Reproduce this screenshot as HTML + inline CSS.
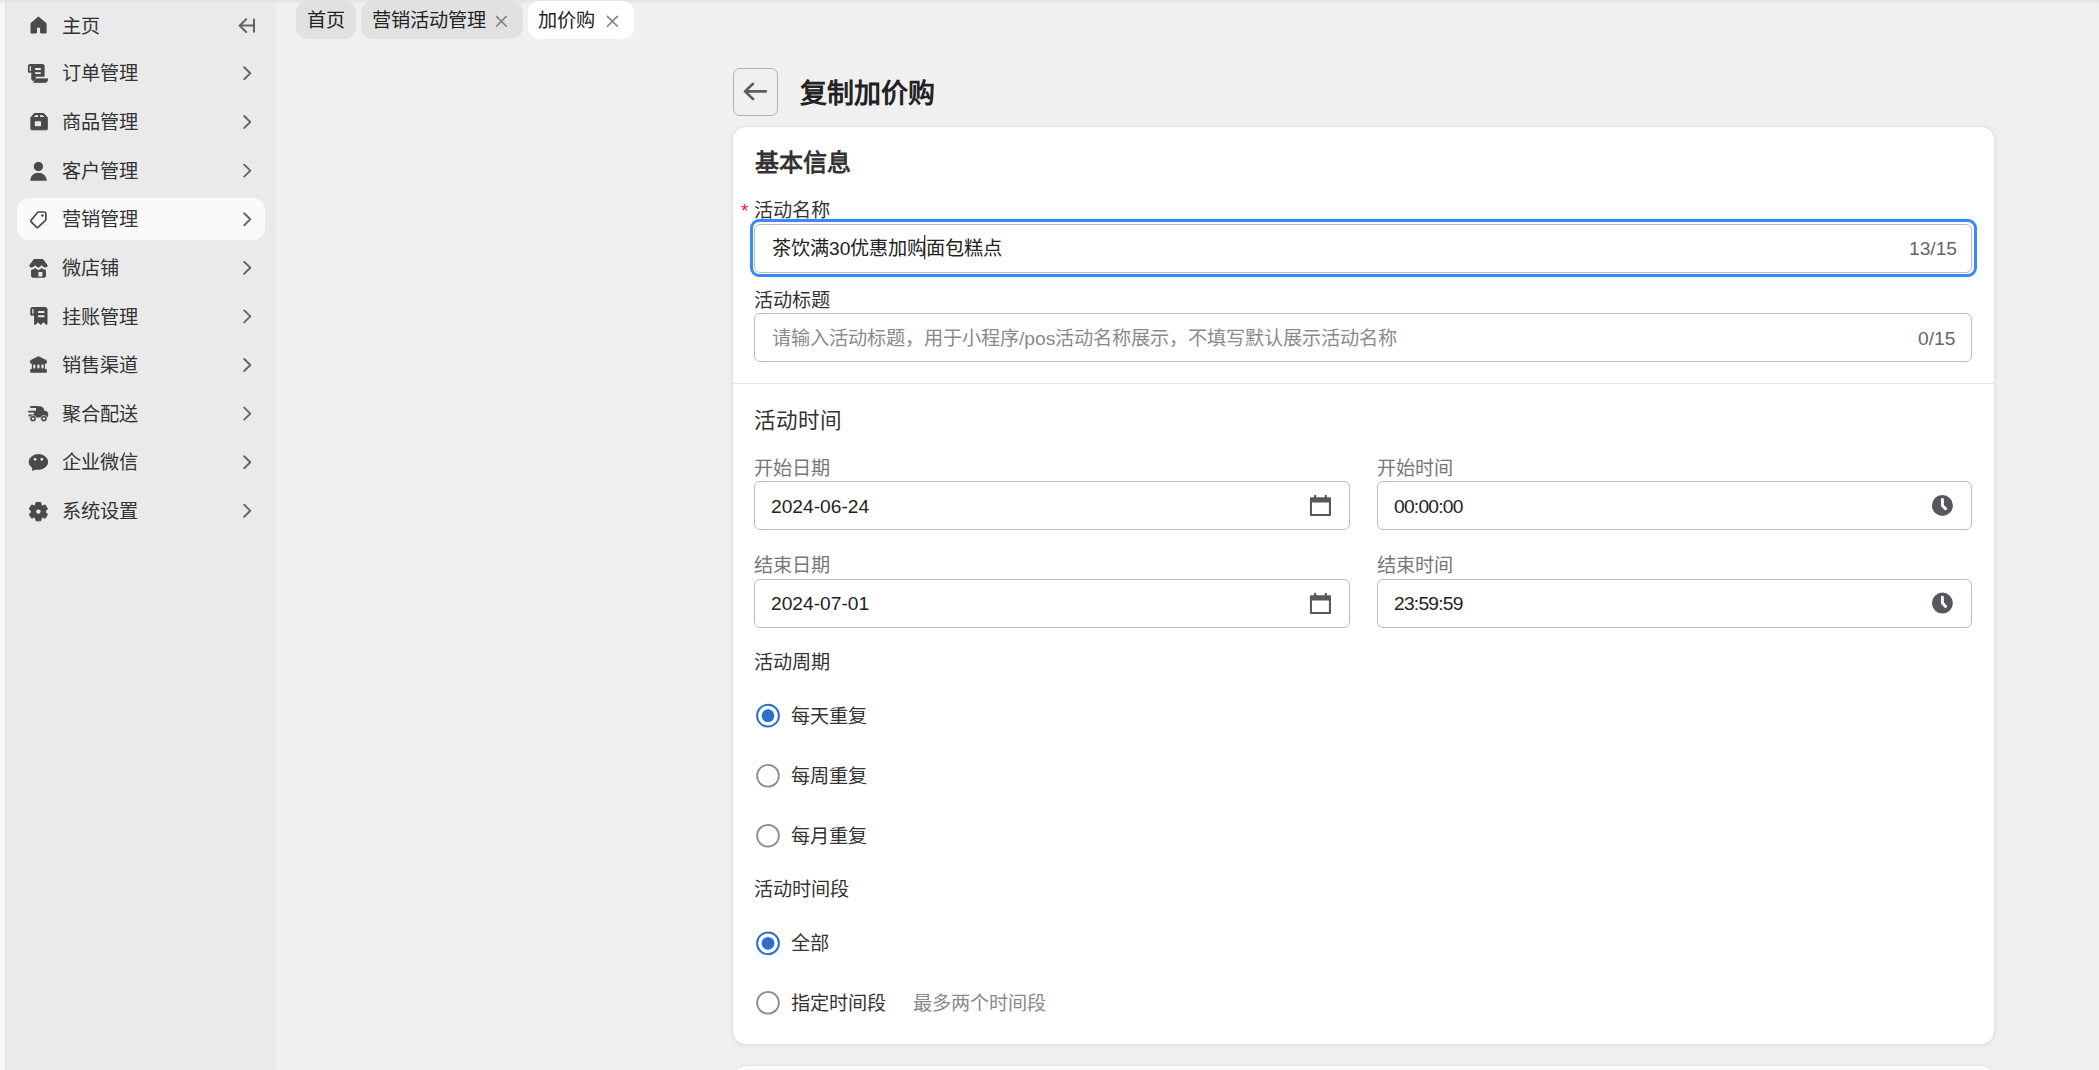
<!DOCTYPE html>
<html lang="zh-CN"><head><meta charset="utf-8">
<style>
*{box-sizing:border-box;margin:0;padding:0}
html,body{width:2099px;height:1070px;overflow:hidden;background:#f0f0f0;font-family:"Liberation Sans",sans-serif;}
.a{position:absolute;white-space:nowrap;line-height:20px;font-size:19.2px;margin-top:1.2px}
.d{margin-top:0}
#strip{position:absolute;left:0;top:0;width:5px;height:1070px;background:#f7f7f7}
#side{position:absolute;left:5px;top:0;width:271px;height:1070px;background:#eaeaea;box-shadow:inset 1px 0 #e2e2e2}
#topsh{position:absolute;left:0;top:0;width:2099px;height:4px;background:linear-gradient(#e2e2e2,rgba(240,240,240,0))}
.mi{color:#333;left:62px}
.tab{position:absolute;top:1px;height:38px;border-radius:12px;background:#e1e1e1}
.tt{color:#222}
.card{position:absolute;left:733px;width:1261px;background:#fff;border-radius:12px;box-shadow:0 0 1px rgba(0,0,0,0.3),0 1px 6px rgba(0,0,0,0.07)}
.inp{position:absolute;height:49px;border:1px solid #b6bcc3;border-radius:6px;background:#fff}
.lbl{color:#333}
.glbl{color:#777}
.val{color:#222}
.ph{color:#8a8a8a}
.cnt{color:#666}
</style></head><body>
<div id="strip"></div>
<div id="side"></div>
<div style="position:absolute;left:17px;top:198px;width:248px;height:42px;border-radius:12px;background:#fafafa"></div>

<!-- sidebar texts -->
<div class="a mi" style="top:15.6px">主页</div>
<div class="a mi" style="top:63.2px">订单管理</div>
<div class="a mi" style="top:112px">商品管理</div>
<div class="a mi" style="top:160.6px">客户管理</div>
<div class="a mi" style="top:209.2px">营销管理</div>
<div class="a mi" style="top:257.8px">微店铺</div>
<div class="a mi" style="top:306.4px">挂账管理</div>
<div class="a mi" style="top:355px">销售渠道</div>
<div class="a mi" style="top:403.6px">聚合配送</div>
<div class="a mi" style="top:452.2px">企业微信</div>
<div class="a mi" style="top:500.8px">系统设置</div>

<!-- sidebar icons -->
<svg id="sideicons" style="position:absolute;left:0;top:0" width="276" height="540" viewBox="0 0 276 540">
<g fill="#4a4a4a" stroke="#4a4a4a" stroke-width="1" stroke-linejoin="round">
<!-- home -->
<path d="M31,23.3 L38.4,17 L46.1,23.3 L46.1,33 L40.6,33 L40.6,28.2 Q40.6,27.3 39.7,27.3 L37.4,27.3 Q36.5,27.3 36.5,28.2 L36.5,33 L31,33 Z"/>
<!-- order/scroll -->
<path d="M28.4,66 Q28.4,64.5 30,64.5 L42.6,64.5 Q44.1,64.5 44.1,66 L44.1,76.2 L35.3,76.2 L35.3,79 Q35.3,80.6 33.4,80.6 Q31.8,80.6 31.8,79 L31.8,72.2 L28.4,72.2 Z"/>
<path d="M36.2,78.9 L47.7,78.9 Q47.6,82.2 45.2,82.3 L33.6,82.3 Q35.9,81.5 36.2,78.9 Z"/>
<!-- box -->
<path d="M34.3,113.5 L43.8,113.5 L47.3,117.6 L47.3,129 Q47.3,129.8 46.5,129.8 L31.7,129.8 Q30.9,129.8 30.9,129 L30.9,117.6 Z"/>
<!-- person -->
<circle cx="38.4" cy="166.5" r="4.1"/>
<path d="M30.7,180.2 Q31.6,173.3 38.4,173.3 Q45.2,173.3 46.3,180.2 Z"/>
<!-- store -->
<path d="M34,259.5 L42.9,259.5 L47.2,265.4 Q47.5,267.1 45.5,267.1 Q43.3,267.1 41.5,264.6 Q40.3,267.1 38.4,267.1 Q36.5,267.1 35.4,264.6 Q33.7,267.1 31.4,267.1 Q29.4,267.1 29.7,265.4 Z"/>
<path d="M31.6,270.2 Q33.8,270 35.4,268.4 Q36.8,270.4 38.4,270.4 Q40,270.4 41.5,268.4 Q43.1,270 45.4,270.2 L45.4,276.3 Q45.4,277.2 44.5,277.2 L32.5,277.2 Q31.6,277.2 31.6,276.3 Z"/>
<!-- receipt -->
<path d="M30.8,309 Q30.8,307.5 32.4,307.5 L45.4,307.5 Q47,307.5 47,309 L47,324.3 L46.3,324.5 L43.5,321.8 L40.8,324.5 L38,321.8 L35.3,324.5 L34.6,324.3 L34.6,315.1 L30.8,315.1 Z"/>
<!-- bank -->
<path d="M38.4,356.7 L46.3,360.6 L46.3,363.2 L30.7,363.2 L30.7,360.6 Z"/>
<rect x="31.9" y="363.2" width="13" height="6" stroke="none"/>
<rect x="30.7" y="369.4" width="15.6" height="2.8"/>
<!-- truck -->
<path d="M36.5,406.8 L40.8,406.8 Q43.5,407 43.9,411 L46.4,411.6 Q47.7,412 47.7,413.6 L47.7,416.2 Q47.7,417 46.9,417 L34.4,417 L34.4,412.3 L36.5,412.3 Z"/>
<!-- chat -->
<ellipse cx="38.4" cy="461.9" rx="9.3" ry="7.4"/>
<path d="M33.2,466.5 L32.4,470.3 L37,468.6 Z"/>
<!-- gear -->
<path d="M35.45,505.20 L36.05,502.40 L40.75,502.40 L41.35,505.20 L42.47,505.85 L45.19,504.96 L47.54,509.04 L45.42,510.95 L45.42,512.25 L47.54,514.16 L45.19,518.24 L42.47,517.35 L41.35,518.00 L40.75,520.80 L36.05,520.80 L35.45,518.00 L34.33,517.35 L31.61,518.24 L29.26,514.16 L31.38,512.25 L31.38,510.95 L29.26,509.04 L31.61,504.96 L34.33,505.85 Z"/>
</g>
<g stroke="#4a4a4a" stroke-width="1.8" stroke-linecap="round" fill="none">
<path d="M31,407 L37,407 M28.9,411.7 L36,411.7 M29.3,415.5 L35,415.5"/>
</g>
<!-- truck wheels -->
<g fill="#4a4a4a" stroke="#eaeaea" stroke-width="0.6"><circle cx="33" cy="418.6" r="3.2"/><circle cx="43.9" cy="418.6" r="3.2"/></g>
<g fill="#eaeaea">
<circle cx="33" cy="418.6" r="1.2"/><circle cx="43.9" cy="418.6" r="1.2"/>
<!-- order holes -->
<rect x="29.7" y="65.9" width="1.2" height="5" rx="0.5"/>
<rect x="34.9" y="68" width="6.1" height="2" rx="0.8"/>
<rect x="34.9" y="72.3" width="6.1" height="1.8" rx="0.8"/>
<!-- box holes -->
<path d="M35.3,115.3 L38.1,115.3 L38.1,116.9 L33.9,116.9 Z"/>
<path d="M40,115.3 L42.8,115.3 L44.3,116.9 L40,116.9 Z"/>
<rect x="34.8" y="121.3" width="6.2" height="4.9" rx="0.8"/>
<!-- store door -->
<rect x="38.4" y="271.9" width="4" height="4.6" rx="0.6"/>
<!-- receipt holes -->
<rect x="32" y="309" width="1.6" height="4.8" rx="0.6" fill="#c8c8c8"/>
<rect x="37.9" y="311.1" width="6.7" height="1.9" rx="0.8"/>
<rect x="37.9" y="315.3" width="6.7" height="1.9" rx="0.8"/>
<!-- bank holes -->
<rect x="33.2" y="364.4" width="2.1" height="4.2" rx="1"/>
<rect x="37.3" y="364.4" width="2.2" height="4.2" rx="1"/>
<rect x="41.4" y="364.4" width="2.2" height="4.2" rx="1"/>
<!-- chat eyes -->
<circle cx="35.1" cy="459.3" r="1.4"/><circle cx="41.8" cy="459.3" r="1.4"/>
<!-- gear hole -->
<circle cx="38.4" cy="511.6" r="2.2"/>
</g>
<!-- tag (active) -->
<path d="M38.7,212 L44,212 Q45.9,212 45.9,213.9 L45.9,219 Q45.9,219.9 45.2,220.6 L38.2,227.2 Q37.3,228 36.4,227.2 L31.2,221.9 Q30.4,221 31.2,220.1 L37.3,212.8 Q37.9,212 38.7,212 Z" fill="none" stroke="#4a4a4a" stroke-width="1.7" stroke-linejoin="round"/>
<rect x="41.2" y="214.3" width="2.4" height="2.4" rx="0.5" transform="rotate(45 42.4 215.5)" fill="#4a4a4a"/>
<g stroke="#626262" stroke-width="2" stroke-linecap="round" stroke-linejoin="round" fill="none">
<path d="M246.2,19.2 L239.6,25.6 L246.2,32 M239.8,25.6 L253,25.6 M254,19.6 L254,31.8"/>
</g>
<g stroke="#666" stroke-width="1.9" stroke-linecap="round" stroke-linejoin="round" fill="none"><path d="M244.2,67.2 L250.3,73.2 L244.2,79.2"/><path d="M244.2,116.0 L250.3,122.0 L244.2,128.0"/><path d="M244.2,164.6 L250.3,170.6 L244.2,176.6"/><path d="M244.2,213.2 L250.3,219.2 L244.2,225.2"/><path d="M244.2,261.8 L250.3,267.8 L244.2,273.8"/><path d="M244.2,310.4 L250.3,316.4 L244.2,322.4"/><path d="M244.2,359.0 L250.3,365.0 L244.2,371.0"/><path d="M244.2,407.6 L250.3,413.6 L244.2,419.6"/><path d="M244.2,456.2 L250.3,462.2 L244.2,468.2"/><path d="M244.2,504.8 L250.3,510.8 L244.2,516.8"/></g>
</svg>

<div id="topsh"></div>
<!-- tabs -->
<div class="tab" style="left:296px;width:60px"></div>
<div class="tab" style="left:361px;width:162px"></div>
<div class="tab" style="left:528px;width:106px;background:#fff"></div>
<div class="a tt" style="left:307px;top:9.85px">首页</div>
<div class="a tt" style="left:372px;top:9.85px">营销活动管理</div>
<div class="a tt" style="left:538px;top:9.85px">加价购</div>


<!-- back button & title -->
<div style="position:absolute;left:733px;top:68px;width:45px;height:48px;border:1.2px solid #a9b1b9;border-radius:7px"></div>
<div class="a" style="left:800px;top:82.4px;font-size:27px;font-weight:bold;color:#222">复制加价购</div>

<!-- card -->
<div class="card" style="top:127px;height:917px"></div>
<div class="card" style="top:1066px;height:100px"></div>
<div style="position:absolute;left:733px;top:383px;width:1261px;height:1px;background:#e3e3e3"></div>

<div class="a" style="left:755px;top:152px;font-size:24px;font-weight:bold;color:#333">基本信息</div>

<div class="a" style="left:741px;top:200px;color:#e02424">*</div>
<div class="a lbl" style="left:754px;top:200px">活动名称</div>
<div style="position:absolute;left:750px;top:219px;width:1227px;height:58px;border:3px solid #3a88fd;border-radius:9px"></div>
<div class="inp" style="left:754px;top:224px;width:1218px"></div>
<div class="a val" style="left:772px;top:238px">茶饮满30优惠加购面包糕点</div>
<div class="a cnt d" style="left:1909px;top:239px">13/15</div>

<div class="a lbl" style="left:754px;top:289.4px">活动标题</div>
<div class="inp" style="left:754px;top:313px;width:1218px"></div>
<div class="a ph" style="left:772px;top:328.2px">请输入活动标题，用于小程序/pos活动名称展示，不填写默认展示活动名称</div>
<div class="a cnt d" style="left:1918px;top:328.5px">0/15</div>

<div class="a lbl" style="left:753.5px;top:409.9px;font-size:21.6px">活动时间</div>

<div class="a glbl" style="left:753.6px;top:457.5px">开始日期</div>
<div class="a glbl" style="left:1376.6px;top:457.5px">开始时间</div>
<div class="inp" style="left:754px;top:481px;width:596px"></div>
<div class="inp" style="left:1377px;top:481px;width:595px"></div>
<div class="a val d" style="left:771px;top:497px">2024-06-24</div>
<div class="a val d" style="left:1394px;top:497px;letter-spacing:-0.75px">00:00:00</div>

<div class="a glbl" style="left:753.6px;top:555px">结束日期</div>
<div class="a glbl" style="left:1376.6px;top:555px">结束时间</div>
<div class="inp" style="left:754px;top:579px;width:596px"></div>
<div class="inp" style="left:1377px;top:579px;width:595px"></div>
<div class="a val d" style="left:771px;top:594px">2024-07-01</div>
<div class="a val d" style="left:1394px;top:594px;letter-spacing:-0.75px">23:59:59</div>

<div class="a lbl" style="left:753.6px;top:652px">活动周期</div>
<div class="a lbl" style="left:791px;top:706px">每天重复</div>
<div class="a lbl" style="left:791px;top:766px">每周重复</div>
<div class="a lbl" style="left:791px;top:826px">每月重复</div>
<div class="a lbl" style="left:753.6px;top:879px">活动时间段</div>
<div class="a lbl" style="left:791px;top:933px">全部</div>
<div class="a lbl" style="left:791px;top:993px">指定时间段</div>
<div class="a ph" style="left:913px;top:993px">最多两个时间段</div>

<svg id="mainicons" style="position:absolute;left:0;top:0" width="2099" height="1070" viewBox="0 0 2099 1070">
<g stroke="#808080" stroke-width="1.5" stroke-linecap="round"><path d="M496.4,16.4 L506.3,26.3 M506.3,16.4 L496.4,26.3"/><path d="M607.4,16.4 L617.3,26.3 M617.3,16.4 L607.4,26.3"/></g>
<path d="M753,83.8 L745,91.4 L753,99 M745.2,91.4 L765.8,91.4" stroke="#5a5e62" stroke-width="2.6" stroke-linecap="round" stroke-linejoin="round" fill="none"/>
<g fill="#55595e"><path d="M1309.9,498.3 Q1309.9,497.3 1310.9,497.3 L1330.0,497.3 Q1331.0,497.3 1331.0,498.3 L1331.0,515.0 Q1331.0,516.0 1330.0,516.0 L1310.9,516.0 Q1309.9,516.0 1309.9,515.0 Z M1312.0,502.6 L1312.0,513.9 L1328.9,513.9 L1328.9,502.6 Z" fill-rule="evenodd"/>
<rect x="1314.1000000000001" y="494.7" width="2.2" height="4" rx="1"/><rect x="1324.7" y="494.7" width="2.2" height="4" rx="1"/></g>
<g fill="#55595e"><path d="M1309.9,596.3 Q1309.9,595.3 1310.9,595.3 L1330.0,595.3 Q1331.0,595.3 1331.0,596.3 L1331.0,613.0 Q1331.0,614.0 1330.0,614.0 L1310.9,614.0 Q1309.9,614.0 1309.9,613.0 Z M1312.0,600.5999999999999 L1312.0,611.9 L1328.9,611.9 L1328.9,600.5999999999999 Z" fill-rule="evenodd"/>
<rect x="1314.1000000000001" y="592.6999999999999" width="2.2" height="4" rx="1"/><rect x="1324.7" y="592.6999999999999" width="2.2" height="4" rx="1"/></g>
<circle cx="1942.4" cy="505.4" r="10.5" fill="#55595e"/><path d="M1942.4,499.4 L1942.4,505.4 L1945.6000000000001,508.79999999999995" stroke="#fff" stroke-width="2.9" stroke-linecap="round" stroke-linejoin="round" fill="none"/>
<circle cx="1942.4" cy="603.1" r="10.5" fill="#55595e"/><path d="M1942.4,597.1 L1942.4,603.1 L1945.6000000000001,606.5" stroke="#fff" stroke-width="2.9" stroke-linecap="round" stroke-linejoin="round" fill="none"/>
<circle cx="768" cy="715.7" r="10.9" fill="#fff" stroke="#2c6fd1" stroke-width="2"/><circle cx="768" cy="715.7" r="6.4" fill="#2c6fd1"/><circle cx="768" cy="775.8" r="10.9" fill="#fff" stroke="#868c93" stroke-width="1.8"/><circle cx="768" cy="835.7" r="10.9" fill="#fff" stroke="#868c93" stroke-width="1.8"/><circle cx="768" cy="943.3" r="10.9" fill="#fff" stroke="#2c6fd1" stroke-width="2"/><circle cx="768" cy="943.3" r="6.4" fill="#2c6fd1"/><circle cx="768" cy="1002.8" r="10.9" fill="#fff" stroke="#868c93" stroke-width="1.8"/>
<rect x="924.1" y="235" width="1.2" height="24.4" fill="#222"/>
</svg>
</body></html>
